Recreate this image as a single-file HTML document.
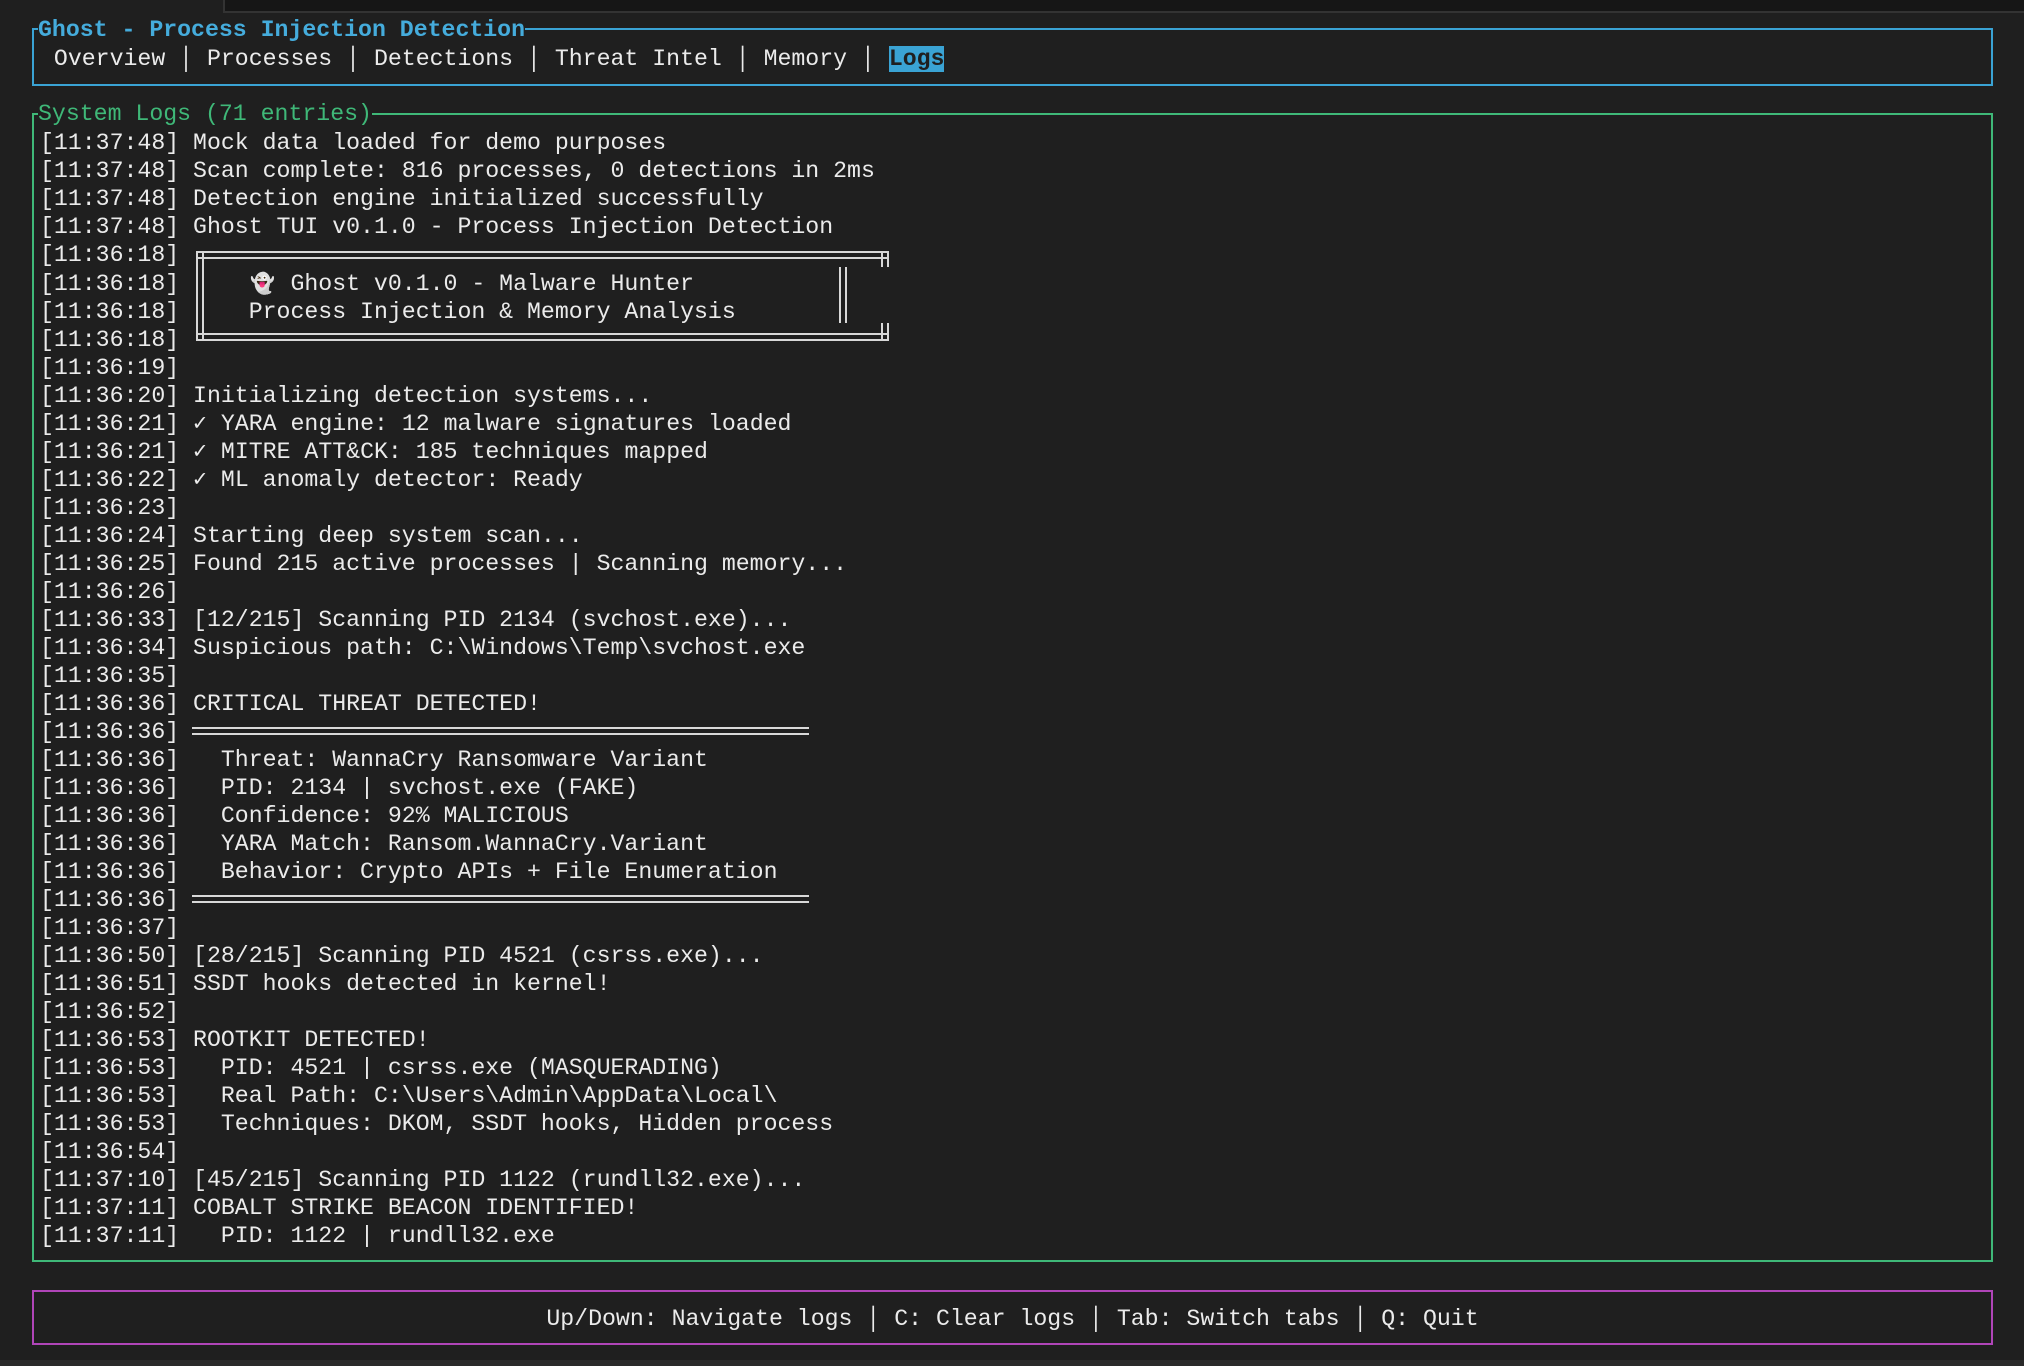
<!DOCTYPE html>
<html><head><meta charset="utf-8"><style>
html,body{margin:0;padding:0;background:#1f1f1f;width:2024px;height:1366px;overflow:hidden;position:relative}
*{box-sizing:border-box}
.t{position:absolute;font-family:"Liberation Mono","DejaVu Sans Mono",monospace;font-size:23.2px;line-height:28px;color:#ebebeb;white-space:pre;margin:0}
.box{position:absolute;border:2px solid}
.ttl{position:absolute;background:#1f1f1f;font-family:"Liberation Mono",monospace;font-size:23.2px;line-height:28px;white-space:pre}
.dl{position:absolute;border-top:2px solid #d8d8d8;border-bottom:2px solid #d8d8d8}
.dv{position:absolute;border-left:2px solid #d8d8d8;border-right:2px solid #d8d8d8}
.em{display:inline-block;width:27.8px;text-align:center;font-family:'DejaVu Sans',sans-serif;font-size:20px}
</style></head><body>
<div style="position:absolute;left:223px;top:0;width:1801px;height:13px;background:#161616;border-left:2px solid #333;border-bottom:2px solid #333"></div>
<div style="position:absolute;left:0;top:1360px;width:2024px;height:6px;background:#2a2a2a"></div>

<div class="box" style="left:32px;top:28px;width:1961px;height:58px;border-color:#3aa3d4"></div>
<div class="ttl" style="left:38px;top:16px;color:#45acdc;font-weight:bold">Ghost - Process Injection Detection</div>
<div class="t" style="left:40px;top:45px"> Overview │ Processes │ Detections │ Threat Intel │ Memory │ <span style="background:#3aa3d4;color:#1f1f1f;font-weight:bold">Logs</span></div>

<div class="box" style="left:32px;top:113px;width:1961px;height:1149px;border-color:#3fb878"></div>
<div class="ttl" style="left:38px;top:100px;color:#3fb878">System Logs (71 entries)</div>

<div class="t" style="left:40px;top:129px">[11:37:48] Mock data loaded for demo purposes
[11:37:48] Scan complete: 816 processes, 0 detections in 2ms
[11:37:48] Detection engine initialized successfully
[11:37:48] Ghost TUI v0.1.0 - Process Injection Detection
[11:36:18]
[11:36:18]     <span class="em">👻</span> Ghost v0.1.0 - Malware Hunter
[11:36:18]     Process Injection &amp; Memory Analysis
[11:36:18]
[11:36:19]
[11:36:20] Initializing detection systems...
[11:36:21] ✓ YARA engine: 12 malware signatures loaded
[11:36:21] ✓ MITRE ATT&amp;CK: 185 techniques mapped
[11:36:22] ✓ ML anomaly detector: Ready
[11:36:23]
[11:36:24] Starting deep system scan...
[11:36:25] Found 215 active processes | Scanning memory...
[11:36:26]
[11:36:33] [12/215] Scanning PID 2134 (svchost.exe)...
[11:36:34] Suspicious path: C:\Windows\Temp\svchost.exe
[11:36:35]
[11:36:36] CRITICAL THREAT DETECTED!
[11:36:36]
[11:36:36]   Threat: WannaCry Ransomware Variant
[11:36:36]   PID: 2134 | svchost.exe (FAKE)
[11:36:36]   Confidence: 92% MALICIOUS
[11:36:36]   YARA Match: Ransom.WannaCry.Variant
[11:36:36]   Behavior: Crypto APIs + File Enumeration
[11:36:36]
[11:36:37]
[11:36:50] [28/215] Scanning PID 4521 (csrss.exe)...
[11:36:51] SSDT hooks detected in kernel!
[11:36:52]
[11:36:53] ROOTKIT DETECTED!
[11:36:53]   PID: 4521 | csrss.exe (MASQUERADING)
[11:36:53]   Real Path: C:\Users\Admin\AppData\Local\
[11:36:53]   Techniques: DKOM, SSDT hooks, Hidden process
[11:36:54]
[11:37:10] [45/215] Scanning PID 1122 (rundll32.exe)...
[11:37:11] COBALT STRIKE BEACON IDENTIFIED!
[11:37:11]   PID: 1122 | rundll32.exe</div>

<!-- banner -->
<div class="dl" style="left:196px;top:251px;width:692px;height:8px"></div>
<div class="dl" style="left:196px;top:333px;width:692px;height:8px"></div>
<div class="dv" style="left:196px;top:251px;width:8px;height:90px"></div>
<div class="dv" style="left:881px;top:251px;width:8px;height:16px"></div>
<div class="dv" style="left:881px;top:323px;width:8px;height:18px"></div>
<div class="dv" style="left:839px;top:267px;width:8px;height:56px"></div>
<!-- separators -->
<div class="dl" style="left:192px;top:727px;width:617px;height:8px"></div>
<div class="dl" style="left:192px;top:895px;width:617px;height:8px"></div>

<div class="box" style="left:32px;top:1290px;width:1961px;height:55px;border-color:#b045b8"></div>
<div class="t" style="left:32px;top:1305px;width:1961px;text-align:center">Up/Down: Navigate logs │ C: Clear logs │ Tab: Switch tabs │ Q: Quit</div>
</body></html>
